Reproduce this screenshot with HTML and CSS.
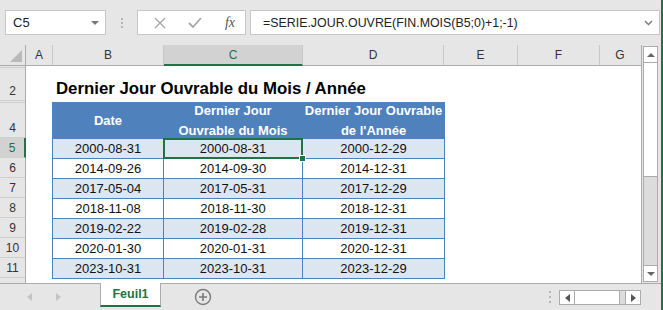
FILE: index.html
```html
<!DOCTYPE html>
<html>
<head>
    <title>Feuil1 - Dernier Jour Ouvrable</title>
    <meta charset="UTF-8">
    <link rel="stylesheet" href="styles.css">
</head>
<body>
    <div class="window">
        <div class="main">
            <div class="formula-bar">
                <div class="name-box">
                    <span>C5</span>
                    <span class="caret"></span>
                </div>
                <div class="grip">
                    <i></i><i></i><i></i>
                </div>
                <div class="fx-buttons">
                    <svg width="12" height="12" viewBox="0 0 12 12"><path d="M1 1 L11 11 M11 1 L1 11" stroke="#a6a6a6" stroke-width="1.4" fill="none"/></svg>
                    <svg width="14" height="12" viewBox="0 0 14 12"><path d="M1 6 L5 10 L13 1" stroke="#a6a6a6" stroke-width="1.8" fill="none"/></svg>
                    <span class="fx">fx</span>
                </div>
                <div class="formula-input">
                    <span>=SERIE.JOUR.OUVRE(FIN.MOIS(B5;0)+1;-1)</span>
                    <svg width="9" height="6" viewBox="0 0 9 6"><path d="M1 1 L4.5 4.5 L8 1" stroke="#7a7a7a" stroke-width="1.5" fill="none"/></svg>
                </div>
            </div>

            <div class="sheet-area">
                <div class="grid">
                    <div class="col-heads">
                        <div class="corner"><span class="corner-tri"></span></div>
                        <div class="col-head col-a">A</div>
                        <div class="col-head col-b">B</div>
                        <div class="col-head col-c selected">C</div>
                        <div class="col-head col-d">D</div>
                        <div class="col-head col-e">E</div>
                        <div class="col-head col-f">F</div>
                        <div class="col-head col-g">G</div>
                    </div>
                    <div class="body">
                        <div class="row-heads">
                            <div class="row-head hidden"></div>
                            <div class="row-head r-title">2</div>
                            <div class="row-head hidden"></div>
                            <div class="row-head r-header">4</div>
                            <div class="row-head selected">5</div>
                            <div class="row-head">6</div>
                            <div class="row-head">7</div>
                            <div class="row-head">8</div>
                            <div class="row-head">9</div>
                            <div class="row-head">10</div>
                            <div class="row-head">11</div>
                            <div class="row-head rest"></div>
                        </div>
                        <div class="cells">
                            <div class="title">Dernier Jour Ouvrable du Mois / Année</div>
                            <table class="data">
                                <colgroup>
                                    <col class="w-b">
                                    <col class="w-c">
                                    <col class="w-d">
                                </colgroup>
                                <tr class="head">
                                    <th><div class="th-text">Date</div></th>
                                    <th><div class="th-text">Dernier Jour<br>Ouvrable du Mois</div></th>
                                    <th><div class="th-text">Dernier Jour Ouvrable<br>de l'Année</div></th>
                                </tr>
                                <tr class="band">
                                    <td>2000-08-31</td>
                                    <td class="active">2000-08-31<span class="sel-box"></span><span class="handle"></span></td>
                                    <td>2000-12-29</td>
                                </tr>
                                <tr>
                                    <td>2014-09-26</td>
                                    <td>2014-09-30</td>
                                    <td>2014-12-31</td>
                                </tr>
                                <tr class="band">
                                    <td>2017-05-04</td>
                                    <td>2017-05-31</td>
                                    <td>2017-12-29</td>
                                </tr>
                                <tr>
                                    <td>2018-11-08</td>
                                    <td>2018-11-30</td>
                                    <td>2018-12-31</td>
                                </tr>
                                <tr class="band">
                                    <td>2019-02-22</td>
                                    <td>2019-02-28</td>
                                    <td>2019-12-31</td>
                                </tr>
                                <tr>
                                    <td>2020-01-30</td>
                                    <td>2020-01-31</td>
                                    <td>2020-12-31</td>
                                </tr>
                                <tr class="band">
                                    <td>2023-10-31</td>
                                    <td>2023-10-31</td>
                                    <td>2023-12-29</td>
                                </tr>
                            </table>
                        </div>
                    </div>
                </div>

                <div class="vscroll">
                    <div class="sb-btn"><span class="tri-up"></span></div>
                    <div class="sb-thumb"></div>
                    <div class="sb-track"></div>
                    <div class="sb-btn"><span class="tri-down"></span></div>
                </div>
            </div>

            <div class="tab-bar">
                <div class="tab-nav">
                    <span class="tri-left"></span>
                    <span class="tri-right"></span>
                </div>
                <div class="tab">Feuil1</div>
                <div class="add-sheet">
                    <svg width="18" height="18" viewBox="0 0 18 18"><circle cx="9" cy="9" r="7.5" stroke="#7a7a7a" stroke-width="1.4" fill="none"/><path d="M9 5 V13 M5 9 H13" stroke="#7a7a7a" stroke-width="1.6"/></svg>
                </div>
                <div class="spacer"></div>
                <div class="grip small">
                    <i></i><i></i><i></i>
                </div>
                <div class="hscroll">
                    <div class="sb-btn"><span class="tri-left dark"></span></div>
                    <div class="sb-thumb"></div>
                    <div class="sb-track"></div>
                    <div class="sb-btn"><span class="tri-right dark"></span></div>
                </div>
            </div>
        </div>
        <div class="edge"></div>
    </div>
</body>
</html>
```

FILE: styles.css
```css
body {
    margin: 0;
    font-family: 'Liberation Sans', Arial, sans-serif;
    background-color: #e6e6e6;
}

.window {
    display: flex;
    width: 663px;
    height: 310px;
    overflow: hidden;
    background-color: #e6e6e6;
}

.main {
    display: flex;
    flex-direction: column;
    width: 661px;
}

.edge {
    width: 2px;
    background-color: #217346;
}

/* formula bar */

.formula-bar {
    display: flex;
    align-items: center;
    height: 45px;
    padding-left: 5px;
    box-sizing: border-box;
}

.name-box,
.fx-buttons,
.formula-input {
    display: flex;
    align-items: center;
    height: 25px;
    background-color: #fff;
    border: 1px solid #c6c6c6;
    box-sizing: border-box;
}

.name-box {
    width: 101px;
    padding: 0 6px 0 7px;
    justify-content: space-between;
    font-size: 13px;
    color: #222;
}

.caret {
    width: 0;
    height: 0;
    border-left: 4px solid transparent;
    border-right: 4px solid transparent;
    border-top: 4px solid #777;
}

.grip {
    display: flex;
    flex-direction: column;
    gap: 2px;
    width: 31px;
    align-items: center;
}

.grip i {
    width: 2px;
    height: 2px;
    background-color: #b5b5b5;
}

.fx-buttons {
    width: 109px;
    padding: 0 10px 0 16px;
    justify-content: space-between;
}

.fx {
    font-family: 'Liberation Serif', serif;
    font-style: italic;
    font-size: 14px;
    color: #555;
}

.formula-input {
    width: 410px;
    margin-left: 4px;
    padding: 0 6px 0 12px;
    justify-content: space-between;
    font-size: 12.4px;
    color: #222;
}

/* sheet */

.sheet-area {
    display: flex;
    height: 238px;
}

.grid {
    display: flex;
    flex-direction: column;
    width: 642px;
    border-right: 1px solid #ababab;
    box-sizing: border-box;
    background-color: #fff;
}

.col-heads {
    display: flex;
    height: 21px;
    background-color: #e6e6e6;
    border-bottom: 1px solid #ababab;
    box-sizing: border-box;
}

.corner {
    display: flex;
    align-items: flex-end;
    justify-content: flex-end;
    width: 26px;
    padding: 0 3px 3px 0;
    box-sizing: border-box;
    border-right: 1px solid #ababab;
}

.corner-tri {
    width: 0;
    height: 0;
    border-left: 12px solid transparent;
    border-bottom: 12px solid #b9b9b9;
}

.col-head {
    display: flex;
    align-items: center;
    justify-content: center;
    border-right: 1px solid #c9c9c9;
    box-sizing: border-box;
    font-size: 12px;
    color: #333;
}

.col-a { width: 27px; }
.col-b { width: 111px; }
.col-c { width: 139px; }
.col-d { width: 141px; }
.col-e { width: 74px; }
.col-f { width: 82px; }
.col-g { width: 40px; border-right: none; }

.col-head.selected {
    background-color: #d2d2d2;
    color: #217346;
    border-bottom: 2px solid #217346;
    margin-bottom: -1px;
}

.body {
    display: flex;
    flex: 1;
}

.row-heads {
    display: flex;
    flex-direction: column;
    width: 26px;
    background-color: #e6e6e6;
    border-right: 1px solid #ababab;
    box-sizing: border-box;
}

.row-head {
    display: flex;
    align-items: flex-end;
    justify-content: center;
    height: 20px;
    padding-bottom: 2px;
    border-bottom: 1px solid #cfcfcf;
    box-sizing: border-box;
    font-size: 12px;
    color: #333;
}

.row-head.hidden {
    height: 2px;
    padding: 0;
}

.row-head.r-title {
    height: 33px;
}

.row-head.r-header {
    height: 35px;
}

.row-head.selected {
    background-color: #d2d2d2;
    color: #217346;
    border-right: 2px solid #217346;
    margin-right: -1px;
}

.row-head.rest {
    flex: 1;
    border-bottom: none;
}

.cells {
    flex: 1;
    padding-left: 26px;
}

.title {
    height: 35px;
    padding: 0 0 2px 4px;
    box-sizing: border-box;
    display: flex;
    align-items: flex-end;
    font-size: 16.8px;
    font-weight: bold;
    color: #000;
}

/* data table */

.data {
    margin-top: 1px;
    border-collapse: collapse;
    table-layout: fixed;
    width: 392px;
    font-size: 13px;
    color: #111;
}

.w-b { width: 111px; }
.w-c { width: 139px; }
.w-d { width: 142px; }

.data th,
.data td {
    padding: 0;
    text-align: center;
    border: 1px solid #4f81bd;
}

.data tr {
    height: 20px;
}

.data tr.head {
    height: 36px;
}

.data th {
    background-color: #4f81bd;
    color: #fff;
    font-size: 13px;
    border-color: #4f81bd;
}

.th-text {
    display: flex;
    flex-direction: column;
    justify-content: center;
    height: 34px;
    line-height: 20px;
}

.data tr.band td {
    background-color: #dce6f1;
}

.data td.active {
    position: relative;
}

.sel-box {
    position: absolute;
    left: -1px;
    top: -1px;
    right: -1px;
    bottom: -1px;
    border: 2px solid #217346;
}

.handle {
    position: absolute;
    right: -4px;
    bottom: -4px;
    width: 5px;
    height: 5px;
    background-color: #217346;
    border: 1px solid #fff;
}

/* scrollbars */

.vscroll {
    display: flex;
    flex-direction: column;
    width: 15px;
    margin: 1px 3px 1px 1px;
    border: 1px solid #ababab;
    box-sizing: border-box;
    background-color: #dcdcdc;
}

.sb-btn {
    display: flex;
    align-items: center;
    justify-content: center;
    background-color: #fff;
}

.vscroll .sb-btn {
    height: 15px;
}

.vscroll .sb-thumb {
    height: 113px;
    background-color: #fff;
    border-top: 1px solid #ababab;
    border-bottom: 1px solid #ababab;
}

.sb-track {
    flex: 1;
}

.vscroll .sb-btn:last-child {
    border-top: 1px solid #ababab;
}

.tri-up,
.tri-down,
.tri-left,
.tri-right {
    width: 0;
    height: 0;
}

.tri-up {
    border-left: 4px solid transparent;
    border-right: 4px solid transparent;
    border-bottom: 4px solid #666;
}

.tri-down {
    border-left: 4px solid transparent;
    border-right: 4px solid transparent;
    border-top: 4px solid #666;
}

.tri-left {
    border-top: 4px solid transparent;
    border-bottom: 4px solid transparent;
    border-right: 5px solid #c4c4c4;
}

.tri-right {
    border-top: 4px solid transparent;
    border-bottom: 4px solid transparent;
    border-left: 5px solid #c4c4c4;
}

.tri-left.dark {
    border-right-color: #555;
}

.tri-right.dark {
    border-left-color: #555;
}

/* sheet tabs */

.tab-bar {
    display: flex;
    align-items: stretch;
    height: 27px;
    border-top: 1px solid #ababab;
    box-sizing: border-box;
}

.tab-nav {
    display: flex;
    align-items: center;
    gap: 24px;
    width: 100px;
    padding-left: 27px;
    box-sizing: border-box;
}

.tab {
    display: flex;
    align-items: center;
    justify-content: center;
    width: 61px;
    height: 24px;
    margin-top: -1px;
    background-color: #fff;
    border-left: 1px solid #ababab;
    border-right: 1px solid #ababab;
    border-bottom: 2px solid #217346;
    box-sizing: border-box;
    font-size: 12.5px;
    font-weight: bold;
    color: #217346;
}

.add-sheet {
    display: flex;
    align-items: center;
    margin-left: 33px;
}

.spacer {
    flex: 1;
}

.grip.small {
    width: 18px;
    justify-content: center;
    gap: 3px;
}

.hscroll {
    display: flex;
    width: 82px;
    height: 15px;
    margin: 6px 20px 0 0;
    border: 1px solid #ababab;
    box-sizing: border-box;
    background-color: #dcdcdc;
}

.hscroll .sb-btn {
    width: 14px;
}

.hscroll .sb-thumb {
    width: 44px;
    background-color: #fff;
    border-left: 1px solid #ababab;
    border-right: 1px solid #ababab;
}

.hscroll .sb-btn:last-child {
    border-left: 1px solid #ababab;
}
```
